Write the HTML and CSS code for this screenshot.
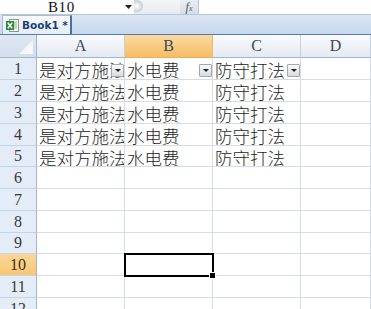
FILE: index.html
```html
<!DOCTYPE html>
<html>
<head>
<meta charset="utf-8">
<link rel="stylesheet" href="styles.css">
</head>
<body>
<div class="app">
  <div class="fbar">
    <div class="namebox">B10</div>
    <div class="nb-arrow"><svg width="7" height="4" viewBox="0 0 7 4"><path d="M0 0h7L3.5 4z" fill="#222"/></svg></div>
    <div class="splitter"><span class="knob"></span></div>
    <div class="fx"><span class="f">f</span><span class="x">x</span></div>
    <div class="finput"></div>
  </div>
  <div class="tabs">
    <div class="tab">
      <svg class="xlicon" width="13" height="13" viewBox="0 0 13 13">
        <rect x="3.5" y="0.5" width="9" height="12" fill="#fff" stroke="#8a9a8a"/>
        <path d="M6 3h5M6 5h5M6 7h5M6 9h5" stroke="#7fae7f" stroke-width="1"/>
        <rect x="0" y="2" width="8" height="9" fill="#2e8b3e"/>
        <path d="M1.8 3.8l4.4 5.4M6.2 3.8l-4.4 5.4" stroke="#fff" stroke-width="1.4"/>
      </svg>
      <span class="tabname">Book1 *</span>
    </div>
  </div>
  <div class="sheet">
    <div class="corner"><svg width="14" height="14" viewBox="0 0 14 14"><path d="M14 0V14H0z" fill="#f3f6fa"/></svg></div>
    <div class="colh">A</div>
    <div class="colh sel">B</div>
    <div class="colh">C</div>
    <div class="colh">D</div>

    <div class="rowh">1</div>
    <div class="cell">是对方施法<span class="dd"></span></div>
    <div class="cell">水电费<span class="dd"></span></div>
    <div class="cell">防守打法<span class="dd"></span></div>
    <div class="cell"></div>

    <div class="rowh">2</div>
    <div class="cell">是对方施法</div>
    <div class="cell">水电费</div>
    <div class="cell">防守打法</div>
    <div class="cell"></div>

    <div class="rowh">3</div>
    <div class="cell">是对方施法</div>
    <div class="cell">水电费</div>
    <div class="cell">防守打法</div>
    <div class="cell"></div>

    <div class="rowh">4</div>
    <div class="cell">是对方施法</div>
    <div class="cell">水电费</div>
    <div class="cell">防守打法</div>
    <div class="cell"></div>

    <div class="rowh">5</div>
    <div class="cell">是对方施法</div>
    <div class="cell">水电费</div>
    <div class="cell">防守打法</div>
    <div class="cell"></div>

    <div class="rowh">6</div><div class="cell"></div><div class="cell"></div><div class="cell"></div><div class="cell"></div>
    <div class="rowh">7</div><div class="cell"></div><div class="cell"></div><div class="cell"></div><div class="cell"></div>
    <div class="rowh">8</div><div class="cell"></div><div class="cell"></div><div class="cell"></div><div class="cell"></div>
    <div class="rowh">9</div><div class="cell"></div><div class="cell"></div><div class="cell"></div><div class="cell"></div>
    <div class="rowh sel">10</div><div class="cell"></div><div class="cell active"><span class="outline"><span class="handle"></span></span></div><div class="cell"></div><div class="cell"></div>
    <div class="rowh">11</div><div class="cell"></div><div class="cell"></div><div class="cell"></div><div class="cell"></div>
    <div class="rowh">12</div><div class="cell"></div><div class="cell"></div><div class="cell"></div><div class="cell"></div>
  </div>
</div>
</body>
</html>
```

FILE: styles.css
```css
html, body {
  margin: 0;
  padding: 0;
  background: #fff;
  overflow: hidden;
}
.app {
  width: 371px;
  height: 309px;
  overflow: hidden;
  display: flex;
  flex-direction: column;
}
.fbar {
  height: 15px;
  box-sizing: border-box;
  border-bottom: 1px solid #b7c6d9;
  display: flex;
  align-items: stretch;
  background: #fff;
}
.namebox {
  width: 122px;
  box-sizing: border-box;
  padding-left: 48px;
  font-family: "Liberation Serif", serif;
  font-size: 15px;
  line-height: 14px;
  letter-spacing: 0.6px;
  color: #111;
}
.nb-arrow {
  width: 12px;
  display: flex;
  align-items: center;
  justify-content: center;
}
.splitter {
  width: 46px;
  display: flex;
  align-items: flex-start;
  background: linear-gradient(#f4f6f8, #e6eaef);
}
.knob {
  width: 9px;
  height: 12px;
  border-radius: 0 6px 6px 0;
  background: radial-gradient(circle at 30% 50%, #fff 0, #d0d5db 60%, #b5bcc5 100%);
}
.fx {
  width: 19px;
  box-sizing: border-box;
  background: linear-gradient(#e9eef4, #d5dde8);
  border-right: 1px solid #b9c5d3;
  font-family: "Liberation Serif", serif;
  font-style: italic;
  color: #555;
  display: flex;
  align-items: center;
  justify-content: center;
  font-size: 12px;
  line-height: 12px;
}
.fx .x { font-size: 8px; margin-top: 4px; }
.finput { flex: 1; }

.tabs {
  height: 23px;
  box-sizing: border-box;
  background: linear-gradient(#dbe6f4, #c7d8ee);
  border-bottom: 1px solid #567bb0;
  display: flex;
  align-items: flex-end;
  padding-left: 2px;
}
.tab {
  height: 19px;
  width: 70px;
  box-sizing: border-box;
  background: linear-gradient(#f7f9fc, #e5edf8);
  border-left: 1px solid #a7bcd9;
  border-top: 1px solid #a7bcd9;
  border-right: 2px solid #4f6f9c;
  display: flex;
  align-items: center;
  padding-left: 3px;
  gap: 3px;
}
.tabname {
  font-family: "DejaVu Sans", sans-serif;
  font-weight: bold;
  font-size: 10.5px;
  color: #1b3f7a;
  white-space: pre;
}

.sheet {
  flex: 1;
  display: grid;
  grid-template-columns: 37px 88px 88px 88px 1fr;
  grid-template-rows: 23px 22px 22px 22px 22px 21px 22px 22px 22px 21px 22px 22px 22px;
}
.corner {
  box-sizing: border-box;
  background: linear-gradient(#dfe7f2, #d3deec);
  border-right: 1px solid #9eb6ce;
  border-bottom: 1px solid #9eb6ce;
  display: flex;
  align-items: flex-end;
  justify-content: flex-end;
  padding: 0 3px 3px 0;
}
.colh {
  box-sizing: border-box;
  background: linear-gradient(#f9fafc, #e4eaf2);
  border-right: 1px solid #c5d1df;
  border-bottom: 1px solid #9eb6ce;
  font-family: "Liberation Serif", serif;
  font-size: 16px;
  color: #3a4a5e;
  display: flex;
  align-items: center;
  justify-content: center;
}
.colh.sel {
  background: linear-gradient(#fbd9a0, #f6bd66);
  border-right-color: #f2b95c;
  border-bottom-color: #f0b050;
}
.rowh {
  box-sizing: border-box;
  background: #e4ecf7;
  border-right: 1px solid #9eb6ce;
  border-bottom: 1px solid #c6d3e3;
  font-family: "Liberation Serif", serif;
  font-size: 16px;
  color: #3a3a3a;
  display: flex;
  align-items: center;
  justify-content: center;
}
.rowh.sel {
  background: linear-gradient(#fbd796, #f7c874);
  color: #3a3020;
}
.cell {
  position: relative;
  box-sizing: border-box;
  border-right: 1px solid #d6dce6;
  border-bottom: 1px solid #d6dce6;
  font-family: "Noto Sans CJK SC", "Noto Sans CJK JP", sans-serif;
  font-size: 17.5px;
  font-weight: 300;
  line-height: 21px;
  padding-top: 1px;
  color: #262626;
  padding-left: 2px;
  white-space: nowrap;
  overflow: hidden;
}
.dd {
  position: absolute;
  right: 0;
  top: 6px;
  width: 13px;
  height: 13px;
  box-sizing: border-box;
  border: 1px solid #a4a9b0;
  border-radius: 1px;
  background: linear-gradient(#fbfbfb, #d9dce0);
}
.dd::after {
  content: "";
  position: absolute;
  left: 3px;
  top: 4px;
  border-left: 3px solid transparent;
  border-right: 3px solid transparent;
  border-top: 3px solid #222;
}
.cell.active { overflow: visible; }
.outline {
  position: absolute;
  left: -1px;
  top: -1px;
  right: -2px;
  bottom: -2px;
  border: 2px solid #000;
  z-index: 2;
}
.handle {
  position: absolute;
  right: -4px;
  bottom: -4px;
  width: 5px;
  height: 5px;
  background: #000;
  border: 1px solid #fff;
}
```
